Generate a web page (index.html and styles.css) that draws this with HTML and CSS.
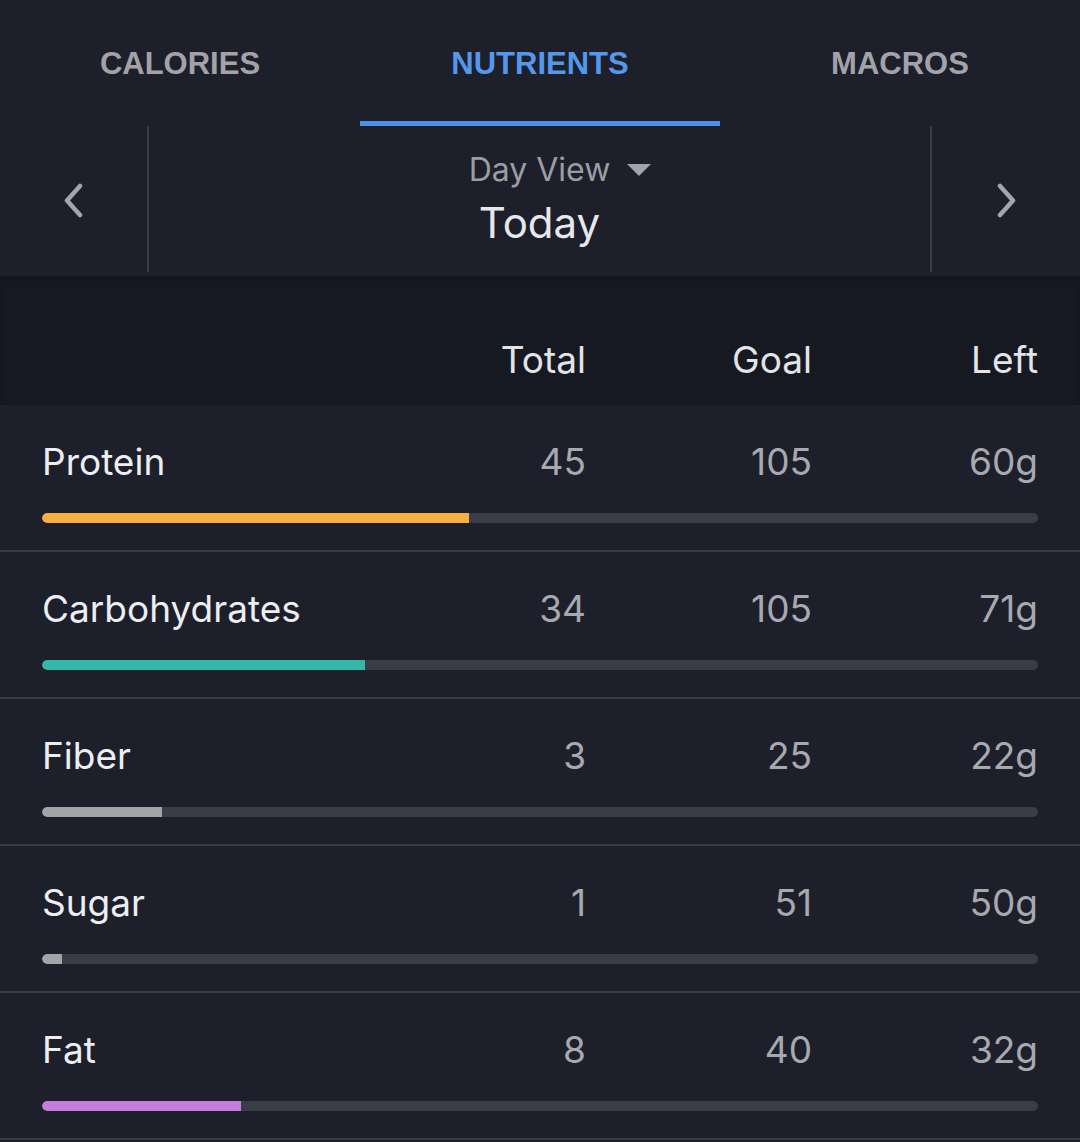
FILE: index.html
```html
<!DOCTYPE html>
<html>
<head>
<meta charset="utf-8">
<link rel="stylesheet" href="styles.css">
</head>
<body>
<div class="app">
  <nav class="tabs">
    <div class="tab">CALORIES</div>
    <div class="tab active">NUTRIENTS</div>
    <div class="tab">MACROS</div>
  </nav>
  <div class="daynav">
    <div class="arrow">
      <svg width="24" height="36" viewBox="0 0 24 36"><path d="M19 3 L6 17.5 L19 32" fill="none" stroke="#a3a5ab" stroke-width="4.5" stroke-linecap="round" stroke-linejoin="round"/></svg>
    </div>
    <div class="day">
      <div class="view"><span>Day View</span><span class="tri"></span></div>
      <div class="today">Today</div>
    </div>
    <div class="arrow">
      <svg width="24" height="36" viewBox="0 0 24 36"><path d="M5 3 L18 17.5 L5 32" fill="none" stroke="#a3a5ab" stroke-width="4.5" stroke-linecap="round" stroke-linejoin="round"/></svg>
    </div>
  </div>
  <div class="thead">
    <div></div>
    <div class="num">Total</div>
    <div class="num">Goal</div>
    <div class="num">Left</div>
  </div>
  <div class="row">
    <div class="cells"><div class="name">Protein</div><div class="num">45</div><div class="num">105</div><div class="num">60g</div></div>
    <div class="track"><div class="fill protein" style="width:42.86%"></div></div>
  </div>
  <div class="row">
    <div class="cells"><div class="name">Carbohydrates</div><div class="num">34</div><div class="num">105</div><div class="num">71g</div></div>
    <div class="track"><div class="fill carbs" style="width:32.38%"></div></div>
  </div>
  <div class="row">
    <div class="cells"><div class="name">Fiber</div><div class="num">3</div><div class="num">25</div><div class="num">22g</div></div>
    <div class="track"><div class="fill fiber" style="width:12%"></div></div>
  </div>
  <div class="row">
    <div class="cells"><div class="name">Sugar</div><div class="num">1</div><div class="num">51</div><div class="num">50g</div></div>
    <div class="track"><div class="fill sugar" style="width:1.96%"></div></div>
  </div>
  <div class="row">
    <div class="cells"><div class="name">Fat</div><div class="num">8</div><div class="num">40</div><div class="num">32g</div></div>
    <div class="track"><div class="fill fat" style="width:20%"></div></div>
  </div>
</div>
</body>
</html>
```

FILE: styles.css
```css
html, body {
  margin: 0;
  padding: 0;
  background: #1d1f2a;
}
.app {
  width: 1080px;
  font-family: Inter, "Noto Sans", sans-serif;
  color: #e9eaee;
}
.tabs {
  display: grid;
  grid-template-columns: repeat(3, 1fr);
  height: 126px;
}
.tab {
  display: flex;
  align-items: center;
  justify-content: center;
  font-family: "Liberation Sans", Arial, sans-serif;
  font-weight: bold;
  font-size: 31px;
  color: #a2a3a8;
  box-sizing: border-box;
  border-bottom: 5px solid transparent;
  padding-top: 7px;
}
.tab.active {
  color: #5597ea;
  border-bottom-color: #4b8fe6;
}
.daynav {
  display: grid;
  grid-template-columns: 149px 1fr 150px;
  height: 150px;
}
.arrow {
  display: flex;
  align-items: center;
  justify-content: center;
  margin-bottom: 4px;
  padding-top: 3px;
}
.arrow:first-child {
  border-right: 2px solid #3a3c47;
  padding-right: 2px;
}
.arrow:last-child {
  border-left: 2px solid #3a3c47;
  padding-left: 2px;
}
.day {
  display: flex;
  flex-direction: column;
  align-items: center;
  padding-top: 24px;
}
.view {
  position: relative;
  font-size: 32px;
  line-height: 40px;
  color: #9c9da3;
}
.tri {
  position: absolute;
  left: 100%;
  top: 14px;
  margin-left: 17px;
  width: 0;
  height: 0;
  border-left: 12px solid transparent;
  border-right: 12px solid transparent;
  border-top: 12px solid #a2a3a8;
}
.today {
  font-size: 42px;
  line-height: 50px;
  margin-top: 8px;
  color: #e7e8ec;
}
.thead {
  display: grid;
  grid-template-columns: 1fr 226px 226px 226px;
  padding: 0 42px 23px 42px;
  height: 129px;
  align-items: end;
  background: #171922;
  box-shadow: inset 0 3px 3px rgba(0,0,0,0.15);
  font-size: 37px;
  line-height: 44px;
  color: #e3e4e8;
  box-sizing: border-box;
}
.num {
  text-align: right;
}
.row {
  padding: 35px 42px 27px 42px;
  border-bottom: 2px solid #383a45;
}
.cells {
  display: grid;
  grid-template-columns: 1fr 226px 226px 226px;
  font-size: 37px;
  line-height: 44px;
}
.cells .name {
  color: #eceef1;
}
.cells .num {
  color: #a8a9ae;
}
.track {
  margin-top: 29px;
  height: 10px;
  border-radius: 5px;
  background: #3a3c47;
  overflow: hidden;
}
.fill {
  height: 100%;
  border-radius: 5px 0 0 5px;
}
.protein { background: #fbae40; }
.carbs { background: #33b7ab; }
.fiber { background: #a3a4a8; }
.sugar { background: #a3a4a8; }
.fat { background: #c57ddd; }
```
